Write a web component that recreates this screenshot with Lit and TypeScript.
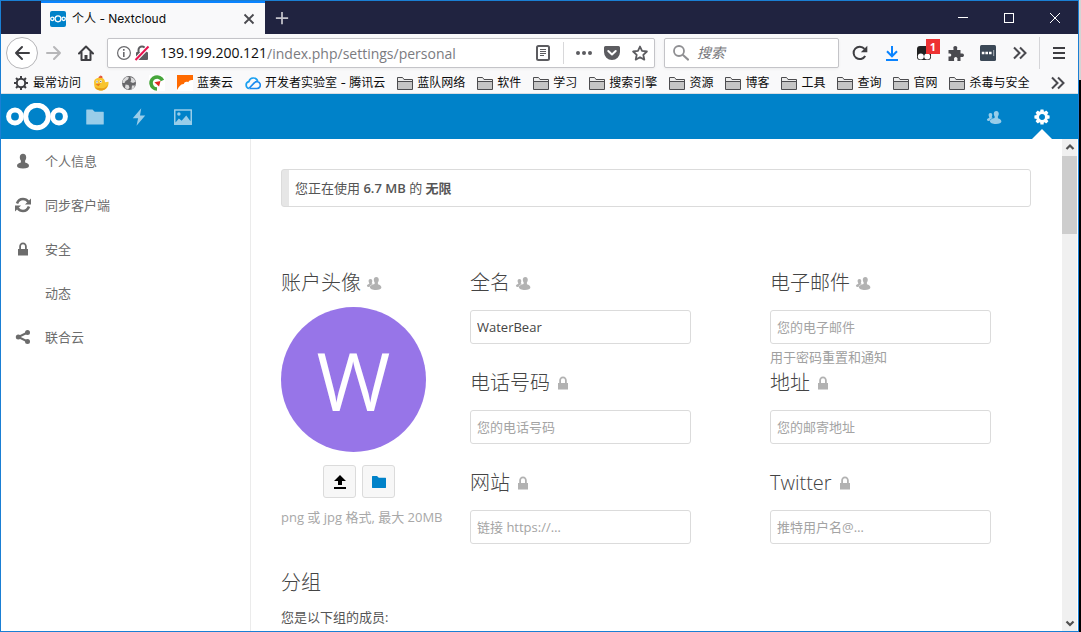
import { LitElement, html, svg, css, nothing } from "lit";
import { customElement, property } from "lit/decorators.js";

const peopleShape = svg`
  <path d="M4.400 4C3.200 4 2.600 4.900 2.600 6c0 .8.200 1.400.6 1.900v1C1.800 9.300.9 9.800.9 10.800c0 .7 1 1.200 2.600 1.300.4-1.400 1.500-2.200 3.700-3l-1.400-.5V7.900c.3-.5.5-1.100.5-1.900 0-1.100-.6-2-1.900-2z"/>
  <path d="M10.300 2C8.700 2 7.800 3.200 7.800 4.800c0 1 .3 1.900.8 2.500v1.800c-2.400.7-4.700 1.500-4.700 3.200 0 1.600 2.500 2.700 6 2.700 3.400 0 5.500-1 5.500-2.500 0-1.700-1.500-2.500-3.500-3.300V7.300c.6-.6.9-1.500.9-2.500 0-1.600-.9-2.800-2.500-2.800z"/>`;

const gearTeeth = (fill: string, teeth: number, width: number) =>
  Array.from({ length: teeth }, (_, i) => svg`<rect x="${8 - width / 2}" y="0.400" width="${width}" height="4" rx="0.600" fill="${fill}" transform="rotate(${(i * 360) / teeth} 8 8)"/>`);

const glyphs: Record<string, unknown> = {
  close: svg`<path d="M3.500 3.500l9 9m0-9l-9 9" stroke="#4a4a4f" stroke-width="1.800" fill="none"/>`,
  plus: svg`<path d="M8 1v14M1 8h14" stroke="#c3c3cb" stroke-width="2" fill="none"/>`,
  minimize: svg`<path d="M3 7.500h10" stroke="#fff" fill="none"/>`,
  maximize: svg`<rect x="3.500" y="3.500" width="9" height="9" stroke="#fff" fill="none"/>`,
  exit: svg`<path d="M3 3l10 10M13 3L3 13" stroke="#fff" fill="none"/>`,
  back: svg`<path d="M15 8H2M8 2L2 8l6 6" stroke="#3e3e42" stroke-width="2" fill="none" stroke-linecap="round" stroke-linejoin="round"/>`,
  forward: svg`<path d="M1 8h13M8 2l6 6-6 6" stroke="#b7b7b9" stroke-width="2" fill="none" stroke-linecap="round" stroke-linejoin="round"/>`,
  home: svg`<path d="M1 8.500L8 1.500l7 7M3.500 7.500V15h9V7.500" stroke="#3e3e42" stroke-width="2" fill="none" stroke-linejoin="round" stroke-linecap="round"/><path d="M6.500 15v-5h3v5z" fill="#3e3e42"/>`,
  info: svg`<circle cx="8" cy="8" r="6.400" stroke="#6a6a6e" stroke-width="1.200" fill="none"/><path d="M7 7h1.600v5H7zM7 4h1.600v1.700H7z" fill="#6a6a6e"/>`,
  insecure: svg`<path d="M4.500 8V5a3.500 3.500 0 0 1 7 0v3" stroke="#5c5c60" stroke-width="2" fill="none"/><rect x="2" y="7" width="12" height="8" rx="1" fill="#5c5c60"/><path d="M2 14.500L14.500 1.500" stroke="#fff" stroke-width="4"/><path d="M1.500 15L14.500 1.500" stroke="#e8134f" stroke-width="2"/>`,
  reader: svg`<rect x="2" y="1" width="12" height="14" rx="1.500" stroke="#5c5c60" stroke-width="2" fill="none"/><path d="M5 4.500h6M5 6.500h6M5 8.500h6M5 10.500h4" stroke="#5c5c60" fill="none"/>`,
  dots: svg`<circle cx="2" cy="8" r="2" fill="#5c5c60"/><circle cx="8" cy="8" r="2" fill="#5c5c60"/><circle cx="14" cy="8" r="2" fill="#5c5c60"/>`,
  pocket: svg`<path d="M1.500 1h13A1.500 1.500 0 0 1 16 2.500V7A8 8 0 0 1 0 7V2.500A1.500 1.500 0 0 1 1.500 1z" fill="#5c5c60"/><path d="M4.300 6L8 9.500 11.700 6" stroke="#fff" stroke-width="2" fill="none" stroke-linecap="round" stroke-linejoin="round"/>`,
  star: svg`<path d="M8 1.500l2 4.400 4.900.6-3.600 3.300 1 4.800L8 12.200l-4.300 2.400 1-4.800L1.100 6.500l4.900-.6z" stroke="#5c5c60" stroke-width="1.800" fill="none" stroke-linejoin="round"/>`,
  search: svg`<circle cx="6" cy="6" r="5" stroke="#8f8f92" stroke-width="1.800" fill="none"/><path d="M9.700 9.700l6 5.500" stroke="#8f8f92" stroke-width="2" fill="none"/>`,
  reload: svg`<path d="M13.200 11A6.200 6.200 0 1 1 12.500 3.800" stroke="#3e3e42" stroke-width="2" fill="none"/><path d="M15.300.8v6.400H8.800z" fill="#3e3e42"/>`,
  download: svg`<path d="M8 1v10M3 6.300l5 5 5-5" stroke="#0a84ff" stroke-width="2" fill="none"/><path d="M2 15h12" stroke="#0a84ff" stroke-width="2"/>`,
  monkey: svg`<rect x="1" y="1" width="14" height="14" rx="3" fill="#222"/><circle cx="4.800" cy="11.400" r="3" fill="#fff"/><circle cx="11.200" cy="11.400" r="3" fill="#fff"/>`,
  puzzle: svg`<path d="M.5 5h5V3.800a2 2 0 1 1 3.600 0V5h3.400v3.500h1.100a1.800 1.800 0 1 1 0 3.400h-1.100v4H9.400v-1.300a1.800 1.800 0 1 0-3.300 0v1.300H.5v-4.300h1.300a1.500 1.500 0 1 0 0-3H.5z" fill="#4a4a4f"/>`,
  vault: svg`<rect width="16" height="16" rx="1.500" fill="#3b4856"/><path d="M1.800 8h2.600M5.400 8H8M9 8h2.600" stroke="#fff" stroke-width="2.400"/><path d="M13.700 5v6" stroke="#aeb4ba" stroke-width="1"/>`,
  more: svg`<path d="M2 2.500L7.500 8 2 13.500M8 2.500L13.500 8 8 13.500" stroke="#4a4a4f" stroke-width="2" fill="none"/>`,
  menu: svg`<path d="M2 3h12M2 8h12M2 13h12" stroke="#3e3e42" stroke-width="2"/>`,
  frequent: svg`<circle cx="8" cy="8" r="4.200" stroke="#3e3e42" stroke-width="2" fill="none"/>${[0, 45, 90, 135, 180, 225, 270, 315].map((a) => svg`<path d="M8 1v3" stroke="#3e3e42" stroke-width="2" transform="rotate(${a} 8 8)"/>`)}`,
  chick: svg`<path d="M5.500 3.500c0-2 1-2.500 1.800-2L7.500.3l2 1.400-.2 2z" fill="#e2482d"/><path d="M1 6.500C1.500 4 4 2.700 7 2.800c3.500 0 5 2 5 4.500l3.500-.5c.5 5-2.500 8.700-7.500 8.700-4 0-6.800-2.200-6.800-5.500z" fill="#f8c52e"/><path d="M7 13c4 1 7-1 7.700-4-.2 4-3 6.500-6.700 6.500-3 0-5.300-1.300-6.300-3.500 1.300.9 3 1 5.300 1z" fill="#e79f1a"/><path d="M2.500 9.300l5-.8-2 2.700z" fill="#ec7a20"/><circle cx="4" cy="6.800" r="1.200" fill="#fff"/><circle cx="4" cy="6.800" r=".6" fill="#333"/><circle cx="7.800" cy="6.500" r="1.200" fill="#fff"/><circle cx="7.800" cy="6.500" r=".6" fill="#333"/>`,
  globe: svg`<circle cx="8" cy="8" r="7" fill="#68686b"/><path d="M2 5l3-3 3 .2-1 2.200L4.500 6l-1 2L1.500 8zM9.500 2l3.500 1.800 1.500 3L12 8l-2.500-1 .7-2zM4.500 9.500l3 .5 1 2.500L7 14.500 4 13zM11 10.500l3 0-1.500 3-2 .8z" fill="#dcdcdd"/>`,
  cyclone: svg`<rect width="16" height="16" fill="#fff"/><path d="M13.500 5.500A6 6 0 1 0 8 14" stroke="#46a53b" stroke-width="3.600" fill="none"/><path d="M5.800 6.800h6.300L9.500 11.800z" fill="#e02b20" transform="rotate(-12 8 9)"/>`,
  lanzou: svg`<rect width="16" height="16" fill="#fff"/><path d="M0 0h16v5c-2.500-.4-4 .5-4.700 2.200C9 6.300 7.500 7 6.800 9 3.500 8.800 2 12 0 15z" fill="#ff6a00"/>`,
  tencent: svg`<path d="M4.300 13.500a3.500 3.500 0 0 1-.4-6.900A4.600 4.600 0 0 1 12.700 6" stroke="#1aa0f0" stroke-width="1.700" fill="none"/><path d="M4.300 13.500h7.700a3.400 3.400 0 1 0-2.500-5.800L4.300 13" stroke="#1b8af0" stroke-width="1.700" fill="none"/>`,
  bookmarkFolder: svg`<path d="M.5 14.500V2.500h5l1.500 2h8.500v10z" fill="#c5c5c5" stroke="#4c4c4f" stroke-linejoin="round"/><path d="M1 3h4.300l1.400 2H15v1.500H1z" fill="#ececec"/><path d="M1 6.500h14" stroke="#4c4c4f"/>`,
  folder: svg`<path d="M1.400 2a.4.400 0 0 0-.4.400v11.200a.4.400 0 0 0 .4.400h13.200a.4.400 0 0 0 .4-.4V4.200a.4.400 0 0 0-.4-.4H7.800L6 2z"/>`,
  bolt: svg`<path d="M9.800 1L3 9h4.300L6 15l7-8.200H8.800z"/>`,
  picture: svg`<path d="M1.200 1.700h13.600a.4.400 0 0 1 .4.400v11.800a.4.400 0 0 1-.4.400H1.200a.4.400 0 0 1-.4-.4V2.100a.4.400 0 0 1 .4-.4zM2 3v9.300l2.700-3.100 2.200 1.700 3.700-4.200 3.400 4.600V3z" fill-rule="evenodd"/><circle cx="4.700" cy="5.600" r="1.400"/>`,
  people: peopleShape,
  gear: svg`<circle cx="8" cy="8" r="4.500" stroke="#fff" stroke-width="3" fill="none"/>${gearTeeth("#fff", 8, 3.4)}`,
  user: svg`<path d="M8 .8C6 .8 4.800 2.300 4.800 4.300c0 1.300.4 2.500 1.100 3.300v1.900C3.700 10.200 2 11 2 12.800 2 14.500 4 15.500 8 15.500s6-1 6-2.700c0-1.800-1.700-2.600-3.900-3.300V7.600c.7-.8 1.100-2 1.100-3.300C11.200 2.300 10 .8 8 .8z"/>`,
  sync: svg`<path d="M2 6.500C3 3.800 5.300 2 8 2c2.300 0 4 1 5.300 2.700" fill="none" stroke="#6c6c6c" stroke-width="2.600"/><path d="M16 1.500v6h-6z"/><path d="M14 9.500c-1 2.700-3.300 4.500-6 4.500-2.300 0-4-1-5.300-2.700" fill="none" stroke="#6c6c6c" stroke-width="2.600"/><path d="M0 14.500v-6h6z"/>`,
  lock: svg`<path d="M8 1.500C5.700 1.500 4.200 3.200 4.200 5.500V8H3v6.500h10V8h-1.200V5.500c0-2.300-1.500-4-3.800-4zM8 3.300c1.200 0 2 .9 2 2.200V8H6V5.500c0-1.300.8-2.200 2-2.200z"/>`,
  share: svg`<circle cx="3.300" cy="8" r="2.500"/><circle cx="12.500" cy="3.500" r="2.500"/><circle cx="12.500" cy="12.500" r="2.500"/><path d="M12.500 3.500L3.300 8l9.200 4.500" fill="none" stroke="#6c6c6c" stroke-width="2"/>`,
  upload: svg`<path d="M8 1L2 7h4v4h4V7h4zM2 13h12v2H2z"/>`,
  chevronUp: svg`<path d="M4.500 10L8 6.500l3.500 3.500" stroke="#505050" stroke-width="2.200" fill="none"/>`,
  chevronDown: svg`<path d="M4.500 6.500L8 10l3.500-3.500" stroke="#505050" stroke-width="2.200" fill="none"/>`,
};

@customElement("ui-icon")
class UiIcon extends LitElement {
  @property() name = "";
  static styles = css`
    :host { display: block; width: 16px; height: 16px; flex: none; }
    svg { display: block; width: 100%; height: 100%; fill: currentColor; }
  `;
  render() {
    return html`<svg viewBox="0 0 16 16" aria-hidden="true">${glyphs[this.name] ?? nothing}</svg>`;
  }
}

@customElement("cloud-logo")
class CloudLogo extends LitElement {
  static styles = css`
    :host { display: block; }
    svg { display: block; width: 100%; height: 100%; }
  `;
  render() {
    return html`<svg viewBox="0 0 62 28" fill="none" stroke="#fff" stroke-width="5" aria-hidden="true">
      <circle cx="31" cy="13.500" r="11.300"/>
      <circle cx="9" cy="13.500" r="6.400" />
      <circle cx="53" cy="13.500" r="6.400" />
    </svg>`;
  }
}

@customElement("browser-chrome")
class BrowserChrome extends LitElement {
  static styles = css`
    :host {
      display: block;
      font: 12px/16px Inter, "Noto Sans CJK SC", sans-serif;
      color: #0c0c0d;
      background: #f9f9fa;
    }
    button, input { font: inherit; color: inherit; border: 0; padding: 0; margin: 0; background: none; }
    button { display: flex; align-items: center; justify-content: center; flex: none; }
    .titlebar { display: flex; height: 33px; background: #202340; padding-left: 40px; box-sizing: border-box; }
    .tab {
      display: flex; align-items: center; gap: 6px; width: 224px; height: 33px; box-sizing: border-box;
      padding: 0 8px 0 9px; background: #f9f9fa; border-top: 2px solid #0a84ff;
    }
    .favicon { display: flex; align-items: center; width: 16px; height: 16px; background: #0082c9; border-radius: 2px; }
    .favicon cloud-logo { width: 16px; height: 8px; }
    .tab-title { flex: 1; white-space: nowrap; }
    .newtab { width: 34px; }
    .newtab ui-icon { width: 14px; height: 14px; }
    .controls { display: flex; margin-left: auto; }
    .controls button { width: 46px; }
    .toolbar { display: flex; align-items: center; height: 38px; padding: 0 3px 0 4px; }
    .back { width: 32px; height: 32px; border: 1px solid #b5b5b8; border-radius: 50%; background: #fff; box-sizing: border-box; margin-left: 1px; }
    .nav { width: 32px; height: 32px; }
    .field {
      display: flex; align-items: center; height: 30px; box-sizing: border-box; background: #fff;
      border: 1px solid #c4c4c8; border-radius: 2px; box-shadow: 0 1px 3px rgba(0, 0, 0, 0.06);
      font-family: "Open Sans", "Noto Sans CJK SC", sans-serif;
    }
    .url { flex: 1; min-width: 0; margin-left: 5px; padding-left: 8px; }
    .host { font-size: 14px; margin-left: 8px; white-space: nowrap; }
    .url input { flex: 1; min-width: 0; font-size: 14px; color: #7b7b7f; height: 24px; }
    .identity { width: 16px; margin-right: 2px; }
    .action { width: 28px; height: 28px; }
    .divider { width: 1px; height: 22px; background: #d8d8da; margin: 0 6px; }
    .search { width: 175px; margin-left: 9px; padding-left: 8px; gap: 8px; }
    .search input { min-width: 0; width: 100%; font-size: 14px; }
    .search input::placeholder { color: #77777b; font-style: italic; opacity: 1; }
    .tools { display: flex; align-items: center; margin-left: 5px; }
    .tool { width: 32px; height: 32px; position: relative; }
    .badge {
      position: absolute; left: 18px; top: 2px; width: 14px; height: 15px; background: #ee3232;
      color: #fff; font: bold 11px/15px "Open Sans", sans-serif; text-align: center;
    }
    .tools .edge { width: 1px; height: 32px; background: #d5d5d8; margin: 0 3px; }
    .bookmarks {
      display: flex; align-items: center; gap: 12px; height: 22px; box-sizing: border-box;
      padding: 0 12px; border-bottom: 1px solid #d9dde2;
    }
    .bookmark { display: flex; align-items: center; gap: 4px; color: inherit; text-decoration: none; white-space: nowrap; }
    .overflow { margin-left: auto; }
  `;

  private bookmarks: [string, string][] = [
    ["frequent", "最常访问"], ["chick", ""], ["globe", ""], ["cyclone", ""], ["lanzou", "蓝奏云"],
    ["tencent", "开发者实验室 - 腾讯云"], ["bookmarkFolder", "蓝队网络"], ["bookmarkFolder", "软件"],
    ["bookmarkFolder", "学习"], ["bookmarkFolder", "搜索引擎"], ["bookmarkFolder", "资源"],
    ["bookmarkFolder", "博客"], ["bookmarkFolder", "工具"], ["bookmarkFolder", "查询"],
    ["bookmarkFolder", "官网"], ["bookmarkFolder", "杀毒与安全"],
  ];

  private button(cls: string, icon: string, label: string, extra: unknown = nothing) {
    return html`<button class=${cls} aria-label=${label}><ui-icon name=${icon}></ui-icon>${extra}</button>`;
  }

  render() {
    return html`
      <div class="titlebar">
        <div class="tab">
          <span class="favicon"><cloud-logo></cloud-logo></span>
          <span class="tab-title">个人 - Nextcloud</span>
          ${this.button("", "close", "关闭标签页")}
        </div>
        ${this.button("newtab", "plus", "新标签页")}
        <div class="controls">
          ${this.button("", "minimize", "最小化")}${this.button("", "maximize", "最大化")}${this.button("", "exit", "关闭")}
        </div>
      </div>
      <div class="toolbar">
        ${this.button("back", "back", "后退")}${this.button("nav", "forward", "前进")}${this.button("nav", "home", "主页")}
        <div class="field url">
          ${this.button("identity", "info", "网站信息")}${this.button("identity", "insecure", "连接不安全")}
          <label class="host" for="address">139.199.200.121</label>
          <input id="address" .value=${"/index.php/settings/personal"} />
          ${this.button("action", "reader", "阅读模式")}
          <span class="divider"></span>
          ${this.button("action", "dots", "页面操作")}${this.button("action", "pocket", "保存到 Pocket")}${this.button("action", "star", "添加书签")}
        </div>
        <div class="field search">
          <ui-icon name="search"></ui-icon>
          <input type="text" aria-label="搜索" placeholder="搜索" />
        </div>
        <div class="tools">
          ${this.button("tool", "reload", "刷新")}${this.button("tool", "download", "下载")}
          ${this.button("tool", "monkey", "脚本", html`<span class="badge">1</span>`)}
          ${this.button("tool", "puzzle", "附加组件")}${this.button("tool", "vault", "密码")}${this.button("tool", "more", "更多工具")}
          <span class="edge"></span>
          ${this.button("tool", "menu", "菜单")}
        </div>
      </div>
      <nav class="bookmarks">
        ${this.bookmarks.map(([icon, text]) => html`
          <a class="bookmark" href="#"><ui-icon name=${icon}></ui-icon>${text ? html`<span>${text}</span>` : nothing}</a>`)}
        ${this.button("overflow", "more", "更多书签")}
      </nav>`;
  }
}

interface Field { id: string; label: string; icon: string; value?: string; placeholder?: string; hint?: string; }

@customElement("personal-settings")
class PersonalSettings extends LitElement {
  static styles = css`
    :host { display: block; padding: 30px 31px 0 30px; color: #555; }
    .quota {
      height: 38px; box-sizing: border-box; border: 1px solid #dbdbdb; border-radius: 3px; padding-left: 13px;
      line-height: 36px; background: linear-gradient(to right, #e6e6e6 7px, #fff 7px);
    }
    strong { font-weight: 600; }
    .profile { display: grid; grid-template-columns: 189px minmax(0, 1fr); margin-top: 60px; }
    .heading {
      display: flex; align-items: center; gap: 5px; height: 30px; margin: 0; padding-top: 2px; box-sizing: border-box;
      font-size: 20px; font-weight: 300; line-height: 28px; color: #444; white-space: nowrap;
    }
    .heading ui-icon { color: #b2b2b2; }
    .avatar {
      display: flex; align-items: center; justify-content: center; width: 145px; height: 145px; margin-top: 10px;
      border-radius: 50%; background: #9775e8; color: #fff; font-size: 80px; line-height: 145px;
    }
    .buttons { display: flex; gap: 6px; margin: 13px 0 0 42px; }
    .buttons button {
      display: flex; align-items: center; justify-content: center; width: 33px; height: 33px; padding: 0;
      border: 1px solid #dbdbdb; border-radius: 3px; background: #f7f7f7; color: #000;
    }
    .buttons .pick { color: #0082c9; }
    .note { margin: 9px 0 0; line-height: 20px; color: #a8a8a8; white-space: nowrap; }
    .fields { display: grid; grid-template-columns: 300px minmax(0, 1fr); grid-auto-rows: 100px; }
    .fields input {
      display: block; width: 221px; max-width: 100%; height: 34px; margin-top: 13px; padding: 0 6px; box-sizing: border-box;
      border: 1px solid #dbdbdb; border-radius: 3px; background: #fff; font: inherit; color: #444;
    }
    .fields input::placeholder { color: #a4a4a4; opacity: 1; }
    .hint { display: block; margin-top: 4px; line-height: 18px; color: #a0a0a0; }
    .groups p { margin: 10px 0 0; line-height: 20px; }
  `;

  private fields: Field[] = [
    { id: "name", label: "全名", icon: "people", value: "WaterBear" },
    { id: "email", label: "电子邮件", icon: "people", placeholder: "您的电子邮件", hint: "用于密码重置和通知" },
    { id: "phone", label: "电话号码", icon: "lock", placeholder: "您的电话号码" },
    { id: "address", label: "地址", icon: "lock", placeholder: "您的邮寄地址" },
    { id: "website", label: "网站", icon: "lock", placeholder: "链接 https://…" },
    { id: "twitter", label: "Twitter", icon: "lock", placeholder: "推特用户名@…" },
  ];

  render() {
    return html`
      <div class="quota">您正在使用 <strong>6.7 MB</strong> 的 <strong>无限</strong></div>
      <div class="profile">
        <section>
          <h2 class="heading">账户头像 <ui-icon name="people"></ui-icon></h2>
          <div class="avatar">W</div>
          <div class="buttons">
            <button aria-label="上传"><ui-icon name="upload"></ui-icon></button>
            <button class="pick" aria-label="从文件中选择"><ui-icon name="folder"></ui-icon></button>
          </div>
          <p class="note">png 或 jpg 格式, 最大 20MB</p>
        </section>
        <form class="fields">
          ${this.fields.map((f) => html`
            <div>
              <label class="heading" for=${f.id}>${f.label} <ui-icon name=${f.icon}></ui-icon></label>
              <input id=${f.id} type="text" .value=${f.value ?? ""} placeholder=${f.placeholder ?? ""} />
              ${f.hint ? html`<span class="hint">${f.hint}</span>` : nothing}
            </div>`)}
        </form>
      </div>
      <section class="groups">
        <h2 class="heading">分组</h2>
        <p>您是以下组的成员:</p>
      </section>`;
  }
}

@customElement("app-root")
export class AppRoot extends LitElement {
  static styles = css`
    :host {
      display: flex; height: 100vh; overflow: hidden;
      background: linear-gradient(to bottom, #d4d4d4 80px, #000 80px);
      font: 13px/20px "Open Sans", "Noto Sans CJK SC", sans-serif;
    }
    .window {
      flex: 1; min-width: 0; display: flex; flex-direction: column; box-sizing: border-box;
      margin-right: 2px; border: 1px solid #1a7fd4; background: #fff;
    }
    header { display: flex; align-items: center; flex: none; height: 45px; background: #0082c9; padding: 0 12px 0 5px; }
    header cloud-logo { width: 62px; height: 28px; }
    .apps { display: flex; margin-left: 5px; }
    .apps a, .right a { display: flex; align-items: center; justify-content: center; width: 44px; height: 45px; color: #fff; }
    .apps ui-icon { width: 20px; height: 20px; opacity: 0.6; }
    .right { display: flex; margin-left: auto; }
    .right a { width: 48px; position: relative; }
    .right .dim ui-icon { opacity: 0.6; }
    .right .current::after {
      content: ""; position: absolute; bottom: 0; left: 14px;
      border: 10px solid transparent; border-top: 0; border-bottom-color: #fff;
    }
    .body { flex: 1; min-height: 0; display: flex; }
    aside { width: 249px; flex: none; border-right: 1px solid #ebebeb; }
    aside a {
      display: flex; align-items: center; gap: 14px; height: 44px; padding-left: 14px;
      color: #6c6c6c; text-decoration: none;
    }
    personal-settings { flex: 1; min-width: 0; overflow: hidden; }
    .scrollbar { width: 15px; flex: none; margin-right: 1px; background: #f0f0f0; display: flex; flex-direction: column; align-items: center; }
    .thumb { width: 100%; height: 78px; background: #cdcdcd; margin-top: 1px; }
    .scrollbar .down { margin-top: auto; }
  `;

  private sections: [string, string][] = [
    ["user", "个人信息"], ["sync", "同步客户端"], ["lock", "安全"], ["", "动态"], ["share", "联合云"],
  ];

  render() {
    return html`
      <div class="window">
        <browser-chrome></browser-chrome>
        <header>
          <cloud-logo></cloud-logo>
          <nav class="apps">
            <a href="#" aria-label="文件"><ui-icon name="folder"></ui-icon></a>
            <a href="#" aria-label="动态"><ui-icon name="bolt"></ui-icon></a>
            <a href="#" aria-label="图库"><ui-icon name="picture"></ui-icon></a>
          </nav>
          <nav class="right">
            <a class="dim" href="#" aria-label="联系人"><ui-icon name="people"></ui-icon></a>
            <a class="current" href="#" aria-label="设置"><ui-icon name="gear"></ui-icon></a>
          </nav>
        </header>
        <div class="body">
          <aside>
            ${this.sections.map(([icon, text]) => html`<a href="#"><ui-icon name=${icon}></ui-icon>${text}</a>`)}
          </aside>
          <personal-settings></personal-settings>
          <div class="scrollbar">
            <ui-icon name="chevronUp"></ui-icon>
            <div class="thumb"></div>
            <ui-icon class="down" name="chevronDown"></ui-icon>
          </div>
        </div>
      </div>`;
  }
}
